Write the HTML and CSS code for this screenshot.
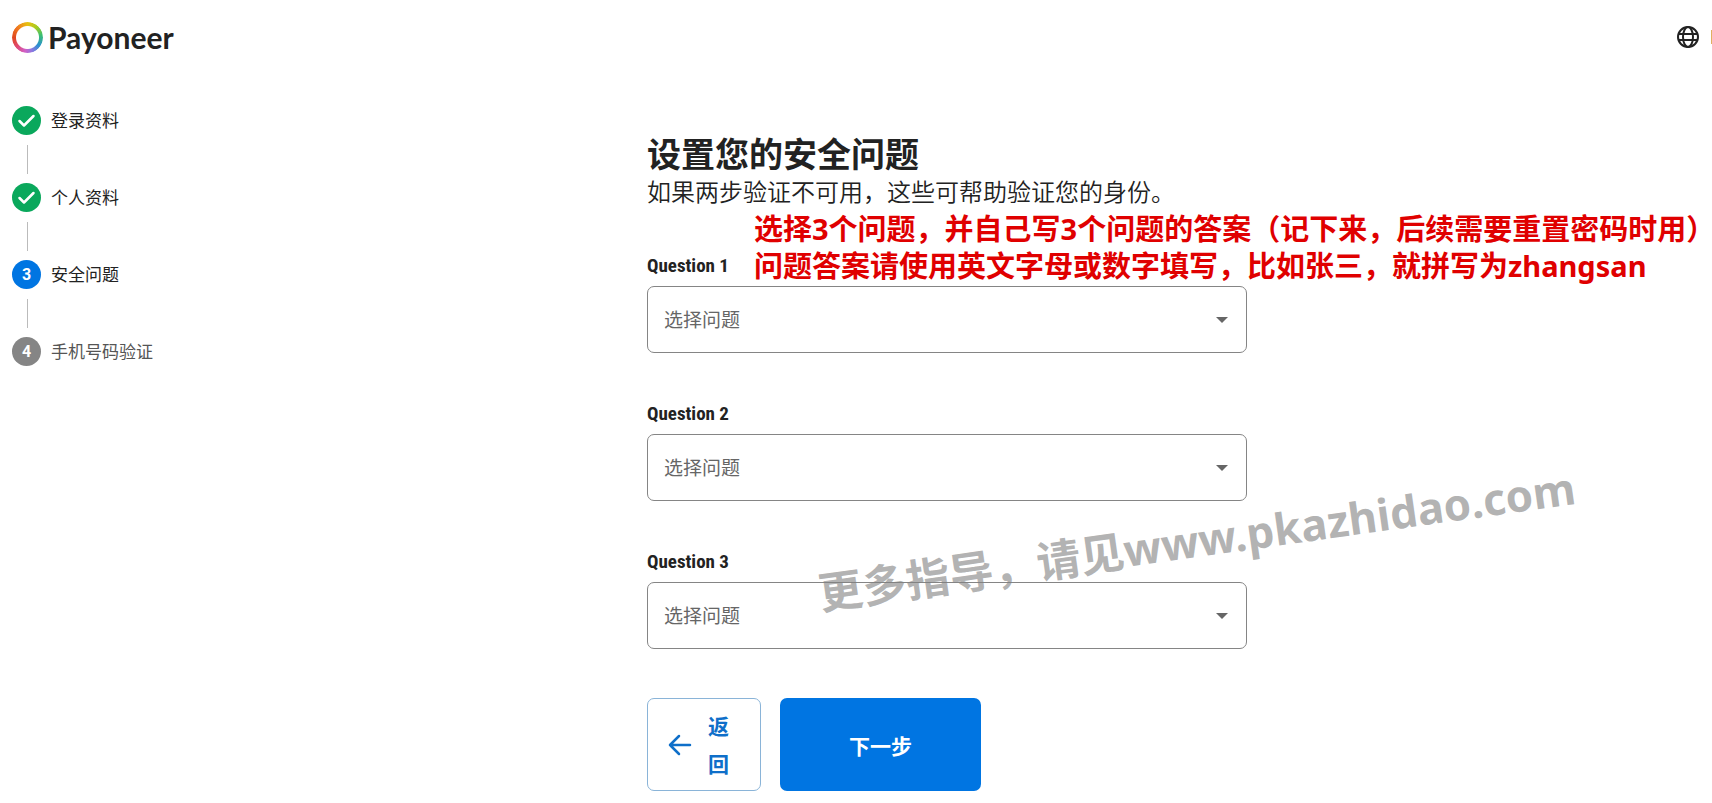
FILE: index.html
```html
<!DOCTYPE html>
<html lang="zh-CN">
<head>
    <meta charset="UTF-8">
    <meta name="viewport" content="width=device-width, initial-scale=1.0">
    <title>Payoneer</title>
    <link rel="stylesheet" href="styles.css">
</head>
<body>
    <header class="header">
        <a class="logo" href="#">
            <span class="logo-ring"></span>
            <span class="logo-text">Payoneer</span>
        </a>
        <div class="header-right">
            <button class="lang-btn" type="button" aria-label="Language">
                <svg width="24" height="24" viewBox="0 0 24 24" fill="none" stroke="#222" stroke-width="2">
                    <circle cx="12" cy="12" r="10"/>
                    <ellipse cx="12" cy="12" rx="5" ry="10"/>
                    <path d="M3 9h18M3 15h18"/>
                </svg>
            </button>
            <span class="lang-edge"></span>
        </div>
    </header>

    <div class="page">
        <ol class="steps">
            <li class="step">
                <span class="dot done">
                    <svg width="29" height="29" viewBox="0 0 29 29" fill="none" stroke="#fff" stroke-width="2.500" stroke-linecap="round" stroke-linejoin="round">
                        <path d="M7.500 15L12 19.500L21.500 10"/>
                    </svg>
                </span>
                <span>登录资料</span>
            </li>
            <li class="step">
                <span class="dot done">
                    <svg width="29" height="29" viewBox="0 0 29 29" fill="none" stroke="#fff" stroke-width="2.500" stroke-linecap="round" stroke-linejoin="round">
                        <path d="M7.500 15L12 19.500L21.500 10"/>
                    </svg>
                </span>
                <span>个人资料</span>
            </li>
            <li class="step">
                <span class="dot current">3</span>
                <span>安全问题</span>
            </li>
            <li class="step todo">
                <span class="dot">4</span>
                <span>手机号码验证</span>
            </li>
        </ol>

        <main class="content">
            <h1>设置您的安全问题</h1>
            <p class="subtitle">如果两步验证不可用，这些可帮助验证您的身份。</p>

            <form class="form">
                <p class="note">选择3个问题，并自己写3个问题的答案（记下来，后续需要重置密码时用<span class="half">）</span><br>问题答案请使用英文字母或数字填写，比如张三，就拼写为zhangsan</p>

                <div class="field">
                    <label for="question1">Question 1</label>
                    <select id="question1">
                        <option>选择问题</option>
                    </select>
                </div>
                <div class="field">
                    <label for="question2">Question 2</label>
                    <select id="question2">
                        <option>选择问题</option>
                    </select>
                </div>
                <div class="field">
                    <label for="question3">Question 3</label>
                    <select id="question3">
                        <option>选择问题</option>
                    </select>
                </div>

                <div class="buttons">
                    <button class="back-btn" type="button">
                        <svg width="24" height="22" viewBox="0 0 24 22" fill="none" stroke="#0f6fc9" stroke-width="2.500" stroke-linecap="round" stroke-linejoin="round">
                            <path d="M22 11H2M11 2L2 11L11 20"/>
                        </svg>
                        <span>返回</span>
                    </button>
                    <button class="next-btn" type="button">下一步</button>
                </div>

                <div class="watermark">更多指导，请见www.pkazhidao.com</div>
            </form>
        </main>
    </div>
</body>
</html>
```
FILE: styles.css
```css
* {
    box-sizing: border-box;
}

body {
    margin: 0;
    font-family: "Noto Sans", "Noto Sans CJK SC", sans-serif;
    color: #222;
    background: #fff;
    overflow-x: hidden;
}

.header {
    display: flex;
    justify-content: space-between;
    align-items: center;
    height: 74px;
    padding-left: 12px;
}

.logo {
    display: flex;
    align-items: center;
    gap: 5px;
    color: #222;
    text-decoration: none;
}

.logo-ring {
    width: 31px;
    height: 31px;
    border-radius: 50%;
    background: conic-gradient(#e8c010, #a8cc20 40deg, #3cc070 80deg, #2a90d0 125deg, #8a78e0 160deg, #d060c8 190deg, #e04870 230deg, #e04820 270deg, #f07a20 315deg, #e8c010);
    mask: radial-gradient(circle, transparent 11px, #000 12px);
}

.logo-text {
    font-family: Lato, sans-serif;
    font-size: 30px;
    font-weight: bold;
    line-height: 36px;
}

.header-right {
    display: flex;
    align-items: center;
    gap: 11px;
}

.lang-btn {
    display: flex;
    padding: 0;
    border: none;
    background: none;
    cursor: pointer;
}

.lang-edge {
    width: 1px;
    height: 14px;
    background: #e0b060;
}

.page {
    display: grid;
    grid-template-columns: 635px 1fr;
    padding: 32px 0 12px 12px;
}

.steps {
    margin: 0;
    padding: 0;
    list-style: none;
}

.step {
    display: flex;
    align-items: center;
    gap: 10px;
    font-size: 17px;
    line-height: 29px;
}

/* line between two steps */
.step + .step::before {
    content: "";
    position: absolute;
    width: 1px;
    height: 29px;
    margin: -77px 0 0 15px;
    background: #bbb;
}

.step + .step {
    margin-top: 48px;
}

.todo {
    color: #555;
}

.dot {
    display: flex;
    justify-content: center;
    align-items: center;
    width: 29px;
    height: 29px;
    border-radius: 50%;
    background: #858585;
    color: #fff;
    font-family: Roboto, sans-serif;
    font-size: 16px;
    font-weight: bold;
}

.done {
    background: #0aa85c;
}

.current {
    background: #0075e2;
}

.content {
    padding-top: 24px;
}

h1 {
    margin: 0;
    font-size: 34px;
    line-height: 48px;
}

.subtitle {
    margin: 0;
    font-size: 24px;
    font-weight: 350;
    line-height: 28px;
}

.form {
    position: relative;
    margin-top: 47px;
}

.note {
    position: absolute;
    top: -43px;
    left: 107px;
    margin: 0;
    color: #e00000;
    font-size: 29px;
    font-weight: bold;
    line-height: 37px;
    white-space: nowrap;
}

.half {
    font-feature-settings: "halt";
}

.field {
    width: 600px;
    margin-bottom: 48px;
}

.field label {
    display: block;
    height: 33px;
    font-family: "Roboto Condensed", "Liberation Sans Narrow", Roboto, sans-serif;
    font-size: 19px;
    font-weight: bold;
    line-height: 26px;
}

select {
    display: block;
    width: 100%;
    height: 67px;
    padding: 0 16px;
    border: 1px solid #858585;
    border-radius: 7px;
    appearance: none;
    background: #fff url("data:image/svg+xml,%3Csvg xmlns='http://www.w3.org/2000/svg' width='12' height='6'%3E%3Cpath d='M0 0h12l-6 6z' fill='%23666'/%3E%3C/svg%3E") no-repeat right 18px center;
    color: #666;
    font-family: inherit;
    font-size: 19px;
}

.buttons {
    display: flex;
    gap: 19px;
    padding-top: 1px;
}

.buttons button {
    height: 93px;
    border-radius: 7px;
    font-family: inherit;
    font-size: 21px;
    font-weight: bold;
    cursor: pointer;
}

.back-btn {
    display: flex;
    align-items: center;
    gap: 15px;
    width: 114px;
    padding: 0 30px 0 20px;
    border: 1px solid #8ab4d8;
    background: #fff;
    color: #0f6fc9;
    line-height: 38px;
}

.back-btn svg {
    flex-shrink: 0;
}

.next-btn {
    width: 201px;
    border: none;
    background: #0075e2;
    color: #fff;
}

.watermark {
    position: absolute;
    top: 257px;
    left: 168px;
    color: rgba(128, 128, 128, 0.6);
    font-size: 44px;
    font-weight: bold;
    line-height: 60px;
    white-space: nowrap;
    transform: rotate(-8deg);
    pointer-events: none;
}
```
